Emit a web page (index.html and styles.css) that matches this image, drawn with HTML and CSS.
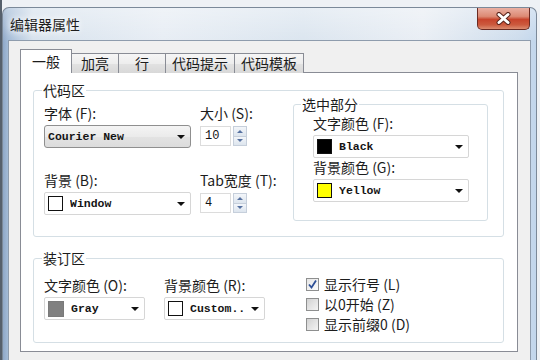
FILE: index.html
```html
<!DOCTYPE html>
<html lang="zh-CN">

<head>
    <meta charset="UTF-8">
    <title>编辑器属性</title>
    <link rel="stylesheet" href="styles.css">
</head>

<body>

    <div class="window">

        <!-- Title bar -->
        <div class="titlebar">
            <span class="title">编辑器属性</span>
            <button class="close-btn" aria-label="关闭">
                <svg width="15" height="13" viewBox="0 0 15 13">
                    <path d="M3 2.5 L12 10.5 M12 2.5 L3 10.5" stroke="#5a241c" stroke-width="5" stroke-linecap="round" fill="none" />
                    <path d="M3 2.5 L12 10.5 M12 2.5 L3 10.5" stroke="#fff" stroke-width="3" stroke-linecap="round" fill="none" />
                </svg>
            </button>
        </div>

        <div class="client">

            <!-- Tabs -->
            <div class="tabs">
                <div class="tab active">一般</div>
                <div class="tab">加亮</div>
                <div class="tab">行</div>
                <div class="tab">代码提示</div>
                <div class="tab">代码模板</div>
            </div>

            <div class="panel">

                <fieldset class="group code-group">
                    <legend>代码区</legend>
                    <div class="code-row">
                        <div class="code-fields">
                            <div class="field">
                                <label>字体 (F):</label>
                                <div class="combo combo-list">
                                    <span class="combo-text">Courier New</span>
                                    <span class="arrow"></span>
                                </div>
                            </div>
                            <div class="field">
                                <label>大小 (S):</label>
                                <div class="spinner">
                                    <div class="spin-edit">10</div>
                                    <div class="spin-btns">
                                        <div class="spin-btn"><span class="tri-up"></span></div>
                                        <div class="spin-btn"><span class="tri-down"></span></div>
                                    </div>
                                </div>
                            </div>
                            <div class="field">
                                <label>背景 (B):</label>
                                <div class="combo">
                                    <span class="swatch swatch-white"></span>
                                    <span class="combo-text">Window</span>
                                    <span class="arrow"></span>
                                </div>
                            </div>
                            <div class="field">
                                <label>Tab宽度 (T):</label>
                                <div class="spinner">
                                    <div class="spin-edit">4</div>
                                    <div class="spin-btns">
                                        <div class="spin-btn"><span class="tri-up"></span></div>
                                        <div class="spin-btn"><span class="tri-down"></span></div>
                                    </div>
                                </div>
                            </div>
                        </div>

                        <fieldset class="group sel-group">
                            <legend>选中部分</legend>
                            <label>文字颜色 (F):</label>
                            <div class="combo sel-combo">
                                <span class="swatch swatch-black"></span>
                                <span class="combo-text">Black</span>
                                <span class="arrow"></span>
                            </div>
                            <label>背景颜色 (G):</label>
                            <div class="combo sel-combo sel-combo-2">
                                <span class="swatch swatch-yellow"></span>
                                <span class="combo-text">Yellow</span>
                                <span class="arrow"></span>
                            </div>
                        </fieldset>
                    </div>
                </fieldset>

                <fieldset class="group gutter-group">
                    <legend>装订区</legend>
                    <div class="gutter-row">
                        <div class="field gutter-field">
                            <label>文字颜色 (O):</label>
                            <div class="combo gutter-combo">
                                <span class="swatch swatch-gray"></span>
                                <span class="combo-text">Gray</span>
                                <span class="arrow"></span>
                            </div>
                        </div>
                        <div class="field gutter-field">
                            <label>背景颜色 (R):</label>
                            <div class="combo gutter-combo">
                                <span class="swatch swatch-white"></span>
                                <span class="combo-text">Custom..</span>
                                <span class="arrow"></span>
                            </div>
                        </div>
                        <div class="checks">
                            <div class="check">
                                <span class="cb-box checked">
                                    <svg width="11" height="11" viewBox="0 0 11 11">
                                        <path d="M2 5.5 L4.5 8.5 L9 1.5" stroke="#2d4f96" stroke-width="1.8" fill="none" />
                                    </svg>
                                </span>
                                <span>显示行号 (L)</span>
                            </div>
                            <div class="check">
                                <span class="cb-box"></span>
                                <span>以0开始 (Z)</span>
                            </div>
                            <div class="check">
                                <span class="cb-box"></span>
                                <span>显示前缀0 (D)</span>
                            </div>
                        </div>
                    </div>
                </fieldset>

            </div>
        </div>
    </div>

</body>

</html>
```

FILE: styles.css
```css
* {
    box-sizing: border-box;
}

body {
    margin: 0;
    height: 360px;
    overflow: hidden;
    background: linear-gradient(to right, #56606c 0, #56606c 2px, #eef1f5 2px);
    font-family: "Noto Sans CJK SC", sans-serif;
    font-size: 14px;
    color: #1c1c1c;
}

/* Window frame */
.window {
    margin: 7px 0 0 2px;
    width: 535px;
    height: 353px;
    padding: 0 5px;
    border: 1px solid #7b8999;
    border-bottom: none;
    border-radius: 7px 7px 0 0;
    background:
        linear-gradient(to bottom, rgba(255, 255, 255, 0.35), rgba(255, 255, 255, 0) 34px),
        linear-gradient(to right, #8fa8c8 0, #a3bbd7 5px, #d7e2ed 30px, #e7edf4 160px, #dbe5ef 300px, #e9eef4 420px, #cddcec 515px, #c2d6ec 100%);
}

.titlebar {
    height: 32px;
    display: flex;
    align-items: center;
    justify-content: space-between;
}

.title {
    padding-left: 2px;
    font-size: 14px;
    color: #1e1e1e;
    text-shadow: 0 0 6px #fff, 0 0 10px #fff;
}

.close-btn {
    align-self: flex-start;
    width: 53px;
    height: 22px;
    margin-right: 1px;
    padding: 0;
    border: 1px solid #6a2a22;
    border-top: none;
    border-radius: 0 0 5px 5px;
    background: linear-gradient(to bottom, #eab0a3 0, #dc8a74 40%, #c8442c 55%, #cc5a3e 80%, #dc8c70 100%);
    display: flex;
    align-items: center;
    justify-content: center;
}

/* Client area */
.client {
    height: 320px;
    overflow: hidden;
    padding: 8px 12px 0 11px;
    background: #f0f0f0;
    border: 1px solid #8e9cad;
    border-bottom: none;
}

.tabs {
    display: flex;
    align-items: flex-end;
    height: 24px;
    margin-bottom: -1px;
}

.tab {
    height: 20px;
    min-width: 48px;
    padding: 0 6px;
    margin-right: -1px;
    border: 1px solid #898c95;
    border-bottom: none;
    background: linear-gradient(to bottom, #f6f6f6, #ededed 50%, #e2e2e2 51%, #d8d8d8);
    text-align: center;
    line-height: 19px;
    color: #1c1c1c;
}

.tab.active {
    height: 24px;
    min-width: 52px;
    background: #fff;
    line-height: 22px;
    position: relative;
    z-index: 1;
}

.panel {
    background: #fff;
    border: 1px solid #898c95;
    padding: 10px 13px 8px 12px;
}

/* Group boxes */
.group {
    margin: 0;
    min-width: 0;
    border: 1px solid #d5dfe5;
    border-radius: 3px;
}

.group legend {
    padding: 0 1px;
    margin-left: -2px;
    font-size: 14px;
    line-height: 14px;
}

.code-group {
    padding: 0 15px 15px 10px;
}

.code-row {
    display: flex;
    justify-content: space-between;
    align-items: flex-start;
}

.code-fields {
    margin-top: 7px;
    display: grid;
    grid-template-columns: 147px 47px;
    column-gap: 9px;
    row-gap: 23px;
}

.field {
    display: flex;
    flex-direction: column;
}

label {
    display: block;
    height: 18px;
    line-height: 18px;
    white-space: nowrap;
}

.sel-group {
    width: 195px;
    padding: 3px 18px 18px 19px;
}

.sel-group legend {
    margin-left: -12px;
}

.sel-combo {
    height: 24px;
    margin-top: 5px;
}

.sel-combo-2 {
    margin-top: 4px;
}

.gutter-group {
    margin-top: 14px;
    padding: 9px 15px 8px 10px;
}

.gutter-row {
    display: flex;
    align-items: flex-start;
}

.gutter-field {
    width: 101px;
    margin-top: 2px;
    margin-right: 19px;
}

.gutter-field + .gutter-field {
    margin-right: 41px;
}

.gutter-combo {
    height: 25px;
    margin-top: 2px;
}

/* Combo boxes */
.combo {
    height: 23px;
    margin-top: 3px;
    display: flex;
    align-items: center;
    padding: 0 5px 0 3px;
    border: 1px solid #d6d6d6;
    border-radius: 2px;
    background: #fff;
    font-family: "Liberation Mono", monospace;
    font-size: 11.5px;
    font-weight: bold;
    color: #141414;
}

.combo-list {
    border-color: #8f8f8f;
    border-radius: 3px;
    background: linear-gradient(to bottom, #f4f4f4, #ebebeb 50%, #e3e3e3 51%, #dcdcdc);
}

.combo-text {
    flex: 1;
    white-space: nowrap;
    overflow: hidden;
}

.arrow {
    width: 0;
    height: 0;
    border-left: 4px solid transparent;
    border-right: 4px solid transparent;
    border-top: 4px solid #111;
    margin-left: 4px;
}

.swatch {
    width: 15px;
    height: 15px;
    margin-right: 7px;
    border: 1px solid #111;
    flex-shrink: 0;
}

.swatch-white {
    background: #fff;
}

.swatch-black {
    background: #000;
}

.swatch-yellow {
    background: #ffff00;
}

.swatch-gray {
    width: 16px;
    height: 16px;
    background: #808080;
    border-color: #7a7a7a;
}

/* Spinner */
.spinner {
    height: 20px;
    margin-top: 4px;
    display: flex;
    gap: 2px;
}

.spin-edit {
    width: 31px;
    border: 1px solid #dcdcdc;
    padding-left: 4px;
    font-family: "Liberation Mono", monospace;
    font-size: 12px;
    line-height: 18px;
    color: #141414;
}

.spin-btns {
    width: 14px;
    display: flex;
    flex-direction: column;
}

.spin-btn {
    flex: 1;
    border: 1px solid #c6cfdb;
    background: linear-gradient(to bottom, #f3f6fa, #dde5ee);
    display: flex;
    align-items: center;
    justify-content: center;
}

.spin-btn + .spin-btn {
    border-top: none;
}

.tri-up,
.tri-down {
    width: 0;
    height: 0;
    border-left: 3px solid transparent;
    border-right: 3px solid transparent;
}

.tri-up {
    border-bottom: 3px solid #5671a0;
}

.tri-down {
    border-top: 3px solid #5671a0;
}

/* Checkboxes */
.checks {
    display: flex;
    flex-direction: column;
}

.check {
    height: 20px;
    display: flex;
    align-items: center;
    gap: 5px;
    white-space: nowrap;
}

.cb-box {
    width: 13px;
    height: 13px;
    border: 1px solid #8e8f8f;
    background: linear-gradient(135deg, #d2d2d2, #f4f4f4);
    display: flex;
    align-items: center;
    justify-content: center;
}

.cb-box.checked {
    background: linear-gradient(135deg, #e6e6e6, #fbfbfb);
}
```
